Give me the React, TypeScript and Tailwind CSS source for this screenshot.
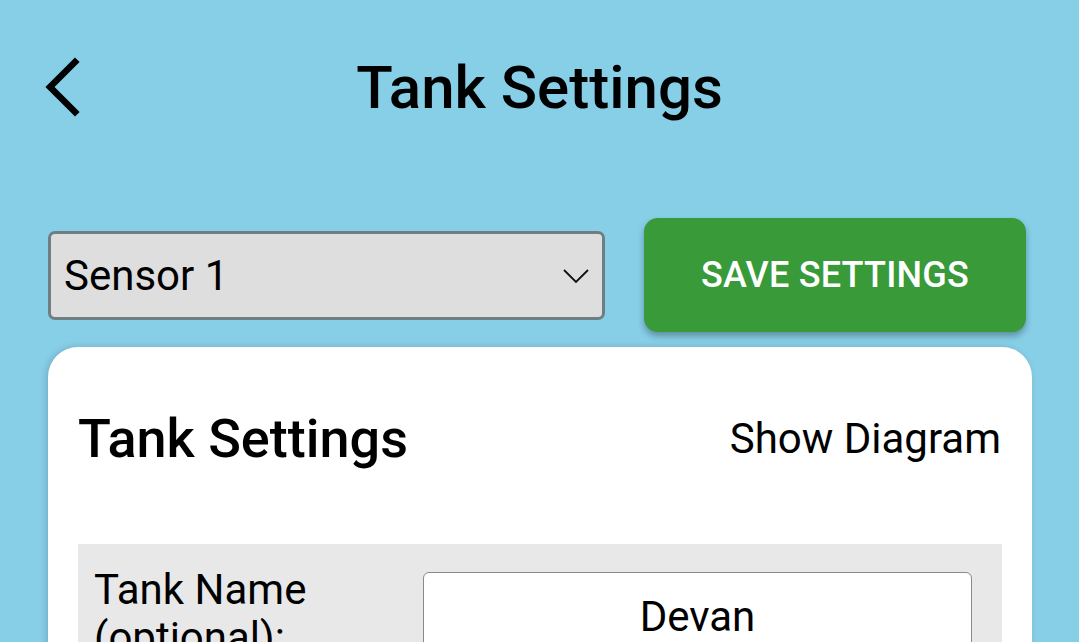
import React from "react";

export default function App() {
  return (
    <div
      className="w-[1079px] h-[642px] overflow-hidden bg-[#87cee7] text-black"
      style={{ fontFamily: "Roboto, 'Noto Sans', sans-serif" }}
    >
      {/* Header */}
      <div className="relative h-[176px]">
        <div className="absolute left-[39px] top-[55px] w-[46px] h-[64px]">
          <svg width="46" height="64" viewBox="0 0 46 64">
            <path d="M36 7 L11 32 L36 57" fill="none" stroke="#000" strokeWidth="6.5" strokeLinecap="square" />
          </svg>
        </div>
        <div className="pt-[52px] text-center text-[60px] leading-[72px] font-medium">Tank Settings</div>
      </div>

      {/* Controls row */}
      <div className="flex items-start pl-[48px] pr-[53px]">
        <div className="mt-[55px] w-[557px] h-[89px] rounded-[7px] border-[3px] border-[#6f7e85] bg-[#dedede] flex items-center justify-between pl-[13px] pr-[12px]">
          <span className="text-[42px] leading-none">Sensor 1</span>
          <svg width="28" height="18" viewBox="0 0 28 18">
            <path d="M2 3 L14 15 L26 3" fill="none" stroke="#111" strokeWidth="1.8" />
          </svg>
        </div>
        <div className="ml-[39px] mt-[42px] w-[382px] h-[114px] rounded-[14px] bg-[#389a39] shadow-[0_4px_6px_rgba(0,0,0,0.3)] flex items-center justify-center">
          <span className="text-white text-[36px] font-medium tracking-[0.2px]">SAVE SETTINGS</span>
        </div>
      </div>

      {/* Card */}
      <div className="ml-[48px] mt-[15px] w-[984px] h-[400px] rounded-t-[30px] bg-white shadow-[-2px_0_6px_rgba(0,0,0,0.15)] pl-[30px] pr-[30px]">
        <div className="flex items-center justify-between h-[197px] pb-[13px]">
          <span className="text-[54px] font-medium leading-none">Tank Settings</span>
          <span className="text-[42px] leading-none mr-[1px]">Show Diagram</span>
        </div>
        <div className="w-[924px] bg-[#e8e8e8] flex pl-[16px] pr-[30px] pt-[22px] pb-[20px]">
          <div className="w-[329px] text-[42px] leading-[48px]">
            Tank Name
            <br />
            (optional):
          </div>
          <div className="flex-1 h-[88px] rounded-[6px] border border-[#8a8a8a] bg-white flex items-center justify-center mt-[6px]">
            <span className="text-[42px]">Devan</span>
          </div>
        </div>
      </div>
    </div>
  );
}
